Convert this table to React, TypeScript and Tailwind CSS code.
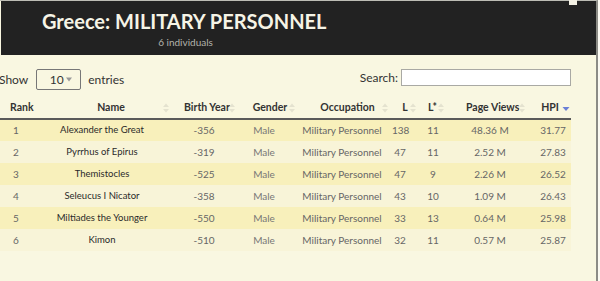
import React from "react";

const rows = [
  { rank: 1, name: "Alexander the Great", year: "-356", gender: "Male", occ: "Military Personnel", l: 138, ls: 11, views: "48.36 M", hpi: "31.77" },
  { rank: 2, name: "Pyrrhus of Epirus", year: "-319", gender: "Male", occ: "Military Personnel", l: 47, ls: 11, views: "2.52 M", hpi: "27.83" },
  { rank: 3, name: "Themistocles", year: "-525", gender: "Male", occ: "Military Personnel", l: 47, ls: 9, views: "2.26 M", hpi: "26.52" },
  { rank: 4, name: "Seleucus I Nicator", year: "-358", gender: "Male", occ: "Military Personnel", l: 43, ls: 10, views: "1.09 M", hpi: "26.43" },
  { rank: 5, name: "Miltiades the Younger", year: "-550", gender: "Male", occ: "Military Personnel", l: 33, ls: 13, views: "0.64 M", hpi: "25.98" },
  { rank: 6, name: "Kimon", year: "-510", gender: "Male", occ: "Military Personnel", l: 32, ls: 11, views: "0.57 M", hpi: "25.87" },
];

const SortIcon = ({ active }: { active?: boolean }) =>
  active ? (
    <svg width="8" height="10" viewBox="0 0 8 10" className="shrink-0">
      <path d="M0.5 4 L7.5 4 L4 8 Z" fill="#6b7fd6" />
    </svg>
  ) : (
    <svg width="8" height="10" viewBox="0 0 8 10" className="shrink-0">
      <path d="M1 4 L7 4 L4 0.5 Z" fill="#e4e2cf" />
      <path d="M1 6 L7 6 L4 9.5 Z" fill="#e4e2cf" />
    </svg>
  );

const Th = ({
  label,
  width,
  active,
  pad,
}: {
  label: string;
  width: string;
  active?: boolean;
  pad: string;
}) => (
  <th className={`${width} p-0 font-bold`}>
    <div className={`flex items-center ${pad}`}>
      <span className="flex-1 min-w-0 text-center whitespace-nowrap">{label}</span>
      <SortIcon active={active} />
    </div>
  </th>
);

const App = () => {
  return (
    <div
      className="w-[600px] h-[281px] bg-[#fbfaf2] overflow-hidden"
      style={{ fontFamily: "Lato, 'Open Sans', sans-serif" }}
    >
      <div className="w-[598px] h-[281px] bg-[#f9f7e1] border-r-2 border-[#8c8c86] border-t border-t-[#bdbdb5]">
        <div className="relative h-[54px] bg-[#222222] ml-px">
          <div className="absolute right-[19px] top-[-1px] w-[8px] h-[5px] bg-[#f3f1e4]" />
          <div className="pl-[41px] pt-[7px]">
            <h1 className="text-[20px] leading-[26px] font-bold text-[#f6f4e6]">
              Greece: MILITARY PERSONNEL
            </h1>
          </div>
          <div className="w-[369px] text-center text-[10px] leading-[14px] text-[#b3b3ac] mt-[1px]">
            6 individuals
          </div>
        </div>

        <div className="flex items-start justify-between h-[43px] pt-[14px] pr-[25px] text-[12px] text-[#333]">
          <div className="flex items-center h-[21px] ml-[-1px]">
            <span>Show</span>
            <div className="ml-[8px] w-[45px] h-[21px] border border-[#777] rounded-[2px] flex items-center justify-center gap-[2px] bg-[#f9f7e1]">
              <span className="text-[12px] ml-[4px]">10</span>
              <svg width="6" height="5" viewBox="0 0 6 5">
                <path d="M0 0.5 L6 0.5 L3 4.5 Z" fill="#999" />
              </svg>
            </div>
            <span className="ml-[7px]">entries</span>
          </div>
          <div className="flex items-center h-[17px]">
            <span>Search:</span>
            <div className="ml-[3px] w-[170px] h-[17px] border border-[#a9a9a4] bg-white" />
          </div>
        </div>

        <table className="w-[571px] table-fixed border-collapse text-[#333]">
          <thead>
            <tr className="h-[21px] text-[10.5px] border-b-2 border-[#5a5a5a]">
              <th className="w-[50px] p-0 pl-[10px] text-left font-bold">Rank</th>
              <Th label="Name" width="w-[126px]" pad="pl-[10px] pr-[6px]" />
              <Th label="Birth Year" width="w-[64px]" pad="pl-[8px] pr-[4px]" />
              <Th label="Gender" width="w-[59px]" pad="pl-[12px] pr-[3px]" />
              <Th label="Occupation" width="w-[93px]" pad="pl-[15px] pr-[3px]" />
              <Th label="L" width="w-[28px]" pad="pl-[9px] pr-[3px]" />
              <Th label="L*" width="w-[28px]" pad="pl-[8px] pr-[3px]" />
              <Th label="Page Views" width="w-[81px]" pad="pl-[18px] pr-[3px]" />
              <Th label="HPI" width="w-[42px]" active pad="pl-[9px] pr-[1px]" />
            </tr>
          </thead>
          <tbody className="text-[10px]">
            {rows.map((r) => (
              <tr
                key={r.rank}
                className={`h-[22px] ${r.rank % 2 === 1 ? "bg-[#f8f0bb]" : "bg-[#f8f4d8]"}`}
              >
                <td className="p-0 pl-[13px] text-[#666]">{r.rank}</td>
                <td className="p-0 pr-[22px] text-center text-[9.5px] text-[#2a2a2a]">{r.name}</td>
                <td className="p-0 pr-[8px] text-center text-[#666]">{r.year}</td>
                <td className="p-0 pr-[11px] text-center text-[#777]">{r.gender}</td>
                <td className="p-0 pr-[7px] text-center text-[#666]">{r.occ}</td>
                <td className="p-0 pr-[12px] text-center text-[#666]">{r.l}</td>
                <td className="p-0 pr-[2px] text-center text-[#666]">{r.ls}</td>
                <td className="p-0 pl-[3px] text-center text-[#666]">{r.views}</td>
                <td className="p-0 pl-[6px] text-center text-[#666]">{r.hpi}</td>
              </tr>
            ))}
          </tbody>
        </table>
      </div>
    </div>
  );
};

export default App;
